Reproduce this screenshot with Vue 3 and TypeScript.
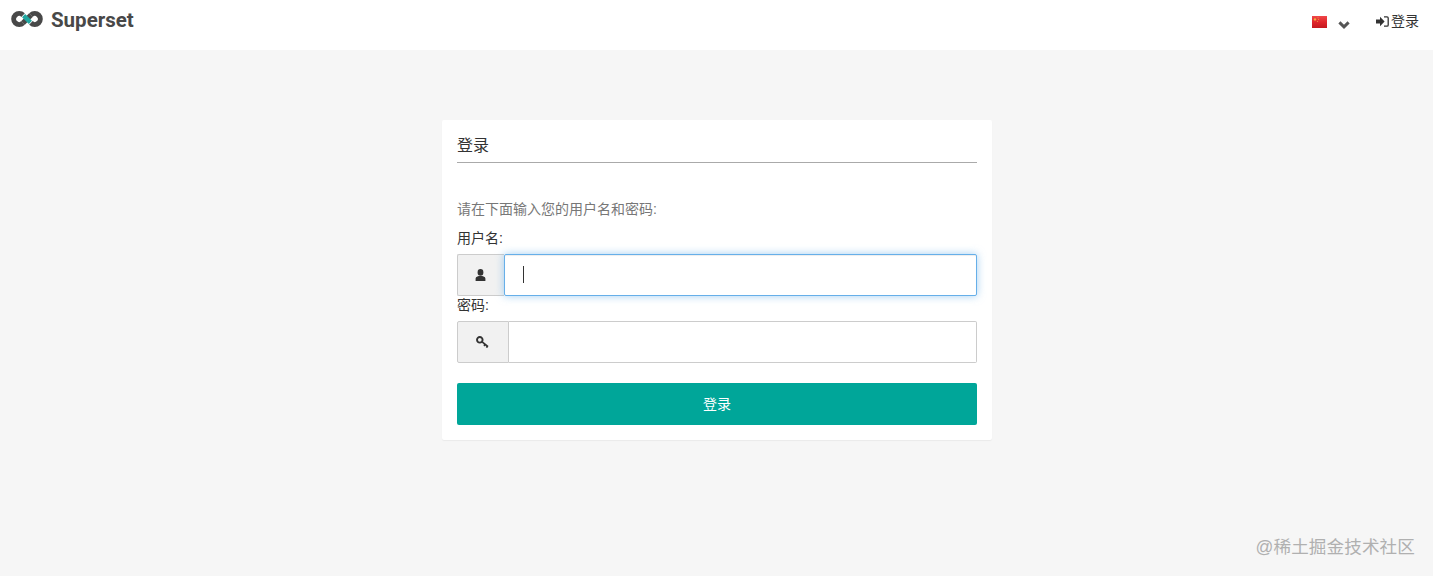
<template>
  <div class="page">
    <header class="navbar">
      <a class="brand">
        <svg class="logo" width="32" height="18" viewBox="0 0 32 18" fill="none">
          <path d="M12.09 5.11 A5.5 5.5 0 1 0 12.09 12.89" stroke="#484848" stroke-width="5" />
          <path d="M19.91 12.89 A5.5 5.5 0 1 0 19.91 5.11" stroke="#484848" stroke-width="5" />
          <path d="M12.09 12.89 L19.91 5.11" stroke="#484848" stroke-width="5" />
          <path d="M12.6 5.6 L19.4 12.4" stroke="#20a7a0" stroke-width="4.4" />
        </svg>
        <span class="brand-name">Superset</span>
      </a>
      <nav class="nav-right">
        <a class="lang">
          <svg class="flag" width="15" height="12" viewBox="0 0 15 12">
            <defs>
              <linearGradient id="flag-red" x1="0" y1="0" x2="0" y2="1">
                <stop offset="0" stop-color="#f0484a" />
                <stop offset="0.5" stop-color="#e0262b" />
                <stop offset="1" stop-color="#c4181e" />
              </linearGradient>
            </defs>
            <rect width="15" height="12" fill="url(#flag-red)" />
            <circle cx="3" cy="3.4" r="1.2" fill="#f0b13a" />
            <circle cx="6" cy="1.8" r="0.5" fill="#f0b13a" />
            <circle cx="6.6" cy="3.6" r="0.5" fill="#f0b13a" />
            <circle cx="5.6" cy="5.4" r="0.5" fill="#f0b13a" />
          </svg>
          <svg class="chevron" width="12" height="8" viewBox="0 0 12 8">
            <path d="M1.4 1.4 L6 5.8 L10.6 1.4" fill="none" stroke="#555" stroke-width="3" />
          </svg>
        </a>
        <a class="login-link">
          <svg width="13" height="11" viewBox="0 0 13 11">
            <path d="M0 3.5 H4 V0.8 L8.6 5.5 L4 10.2 V7.5 H0 Z" fill="#333" />
            <path d="M8 0.9 H11 Q12.2 0.9 12.2 2.1 V8.9 Q12.2 10.1 11 10.1 H8" fill="none" stroke="#333" stroke-width="1.3" />
          </svg>
          <span>登录</span>
        </a>
      </nav>
    </header>

    <main class="content">
      <form class="card" @submit.prevent>
        <div class="card-title">登录</div>
        <p class="hint">请在下面输入您的用户名和密码:</p>

        <label class="field-label first">用户名:</label>
        <div class="input-group">
          <span class="addon addon-user">
            <svg width="11" height="12" viewBox="0 0 11 12">
              <ellipse cx="5.5" cy="3.4" rx="2.9" ry="3.3" fill="#333" />
              <path d="M0.6 12 V9.6 Q0.6 8 2.4 7.5 L3.8 7 H7.2 L8.6 7.5 Q10.4 8 10.4 9.6 V12 Z" fill="#333" />
            </svg>
          </span>
          <div class="input-wrap">
            <input class="input focused" type="text" />
            <span class="caret"></span>
          </div>
        </div>

        <label class="field-label">密码:</label>
        <div class="input-group">
          <span class="addon addon-key">
            <svg width="13" height="12" viewBox="0 0 13 12">
              <circle cx="3.8" cy="3.8" r="2.8" fill="none" stroke="#333" stroke-width="1.9" />
              <path d="M5.8 5.6 L12 10.6 M9.2 8.4 L8 9.8 M11.4 10.2 L10.4 11.6" fill="none" stroke="#333" stroke-width="1.8" />
            </svg>
          </span>
          <div class="input-wrap">
            <input class="input" type="password" />
          </div>
        </div>

        <button class="submit" type="submit">登录</button>
      </form>
    </main>

    <div class="watermark">@稀土掘金技术社区</div>
  </div>
</template>

<script setup lang="ts">
</script>

<style>
html,
body {
  margin: 0;
  background: #f6f6f6;
}
</style>

<style scoped>
.page {
  position: relative;
  height: 576px;
  overflow: hidden;
  background: #f6f6f6;
  font-family: "Liberation Sans", "Noto Sans CJK SC", sans-serif;
  font-size: 14px;
  color: #333;
}

.navbar {
  display: flex;
  justify-content: space-between;
  height: 50px;
  background: #fff;
}

.brand {
  display: flex;
  align-items: flex-start;
  padding: 10px 0 0 11px;
}

.logo {
  display: block;
}

.brand-name {
  margin-left: 8px;
  font-family: Roboto, sans-serif;
  font-size: 20.5px;
  font-weight: 700;
  line-height: 21px;
  color: #484848;
}

.nav-right {
  display: flex;
  align-items: flex-start;
  padding-right: 14px;
}

.lang {
  display: flex;
  align-items: flex-start;
  padding-top: 16px;
}

.flag {
  display: block;
}

.chevron {
  margin: 5px 0 0 11px;
}

.login-link {
  display: flex;
  align-items: center;
  gap: 2px;
  margin-left: 26px;
  padding-top: 11px;
  font-size: 14px;
  line-height: 20px;
  color: #333;
}

.content {
  display: flex;
  justify-content: center;
  padding-top: 70px;
  padding-left: 1px;
}

.card {
  width: 550px;
  height: 320px;
  box-sizing: border-box;
  padding: 16px 15px 15px;
  background: #fff;
  border-radius: 2px;
  box-shadow: 0 1px 1px rgba(0, 0, 0, 0.05);
}

.card-title {
  height: 26px;
  border-bottom: 1px solid #aaa;
  font-size: 16px;
  line-height: 19px;
  color: #333;
}

.hint {
  margin: 37px 0 0;
  font-size: 14px;
  line-height: 18px;
  color: #777;
}

.field-label {
  display: block;
  height: 17px;
  margin-top: 1px;
  margin-bottom: 7px;
  font-size: 14px;
  line-height: 17px;
  color: #333;
}

.field-label.first {
  margin-top: 12px;
}

.input-group {
  display: flex;
  height: 42px;
}

.addon {
  display: flex;
  align-items: center;
  justify-content: center;
  flex: none;
  box-sizing: border-box;
  background: #f1f1f1;
  border: 1px solid #ccc;
  border-right: 0;
  border-radius: 2px 0 0 2px;
}

.addon-user {
  width: 47px;
  padding-right: 1px;
}

.addon-key {
  width: 52px;
  padding-right: 1px;
  border-right: 1px solid #ccc;
}

.input-wrap {
  position: relative;
  flex: 1;
}

.input {
  display: block;
  width: 100%;
  height: 42px;
  box-sizing: border-box;
  padding: 0 18px;
  background: #fff;
  border: 1px solid #ccc;
  border-left: 0;
  border-radius: 0 2px 2px 0;
  outline: none;
  font-family: inherit;
  font-size: 14px;
}

.input.focused {
  position: relative;
  border: 1px solid #66afe9;
  box-shadow: inset 0 1px 1px rgba(0, 0, 0, 0.075), 0 0 8px rgba(102, 175, 233, 0.6);
  border-radius: 2px;
  caret-color: transparent;
}

.caret {
  position: absolute;
  left: 19px;
  top: 12px;
  width: 1px;
  height: 17px;
  background: #333;
}

.submit {
  display: block;
  width: 100%;
  height: 42px;
  margin-top: 20px;
  padding: 0 0 2px;
  background: #00a699;
  border: 0;
  border-radius: 2px;
  color: #fff;
  font-family: inherit;
  font-size: 14px;
  cursor: pointer;
}

.watermark {
  position: absolute;
  right: 18px;
  bottom: 18px;
  font-size: 17.6px;
  line-height: 22px;
  letter-spacing: 0.1px;
  color: #b0b0b0;
}
</style>
